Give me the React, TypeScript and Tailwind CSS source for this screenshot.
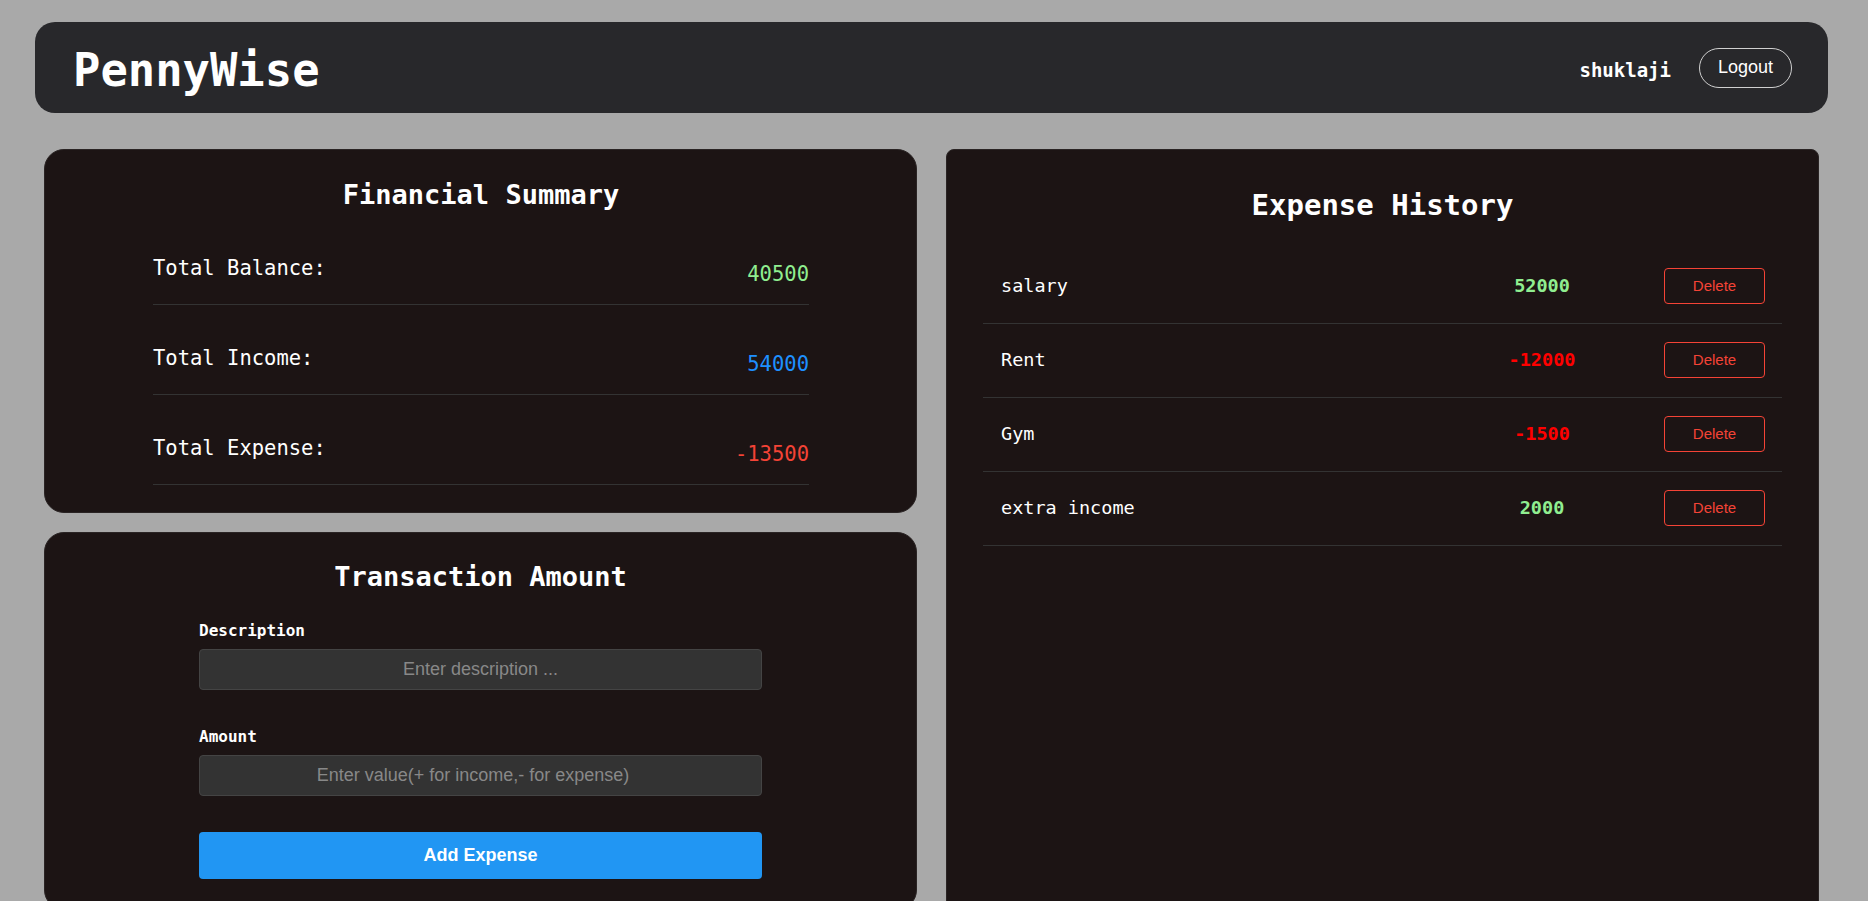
import React from "react";

const mono = { fontFamily: '"DejaVu Sans Mono", "Liberation Mono", monospace' };
const sans = { fontFamily: '"Liberation Sans", Arial, sans-serif' };

const summary = [
  { label: "Total Balance:", value: "40500", color: "text-[#90ee90]" },
  { label: "Total Income:", value: "54000", color: "text-[#1e90ff]" },
  { label: "Total Expense:", value: "-13500", color: "text-[#f44336]" },
];

const history = [
  { desc: "salary", amount: "52000", color: "text-[#90ee90]" },
  { desc: "Rent", amount: "-12000", color: "text-[#ff0000]" },
  { desc: "Gym", amount: "-1500", color: "text-[#ff0000]" },
  { desc: "extra income", amount: "2000", color: "text-[#90ee90]" },
];

export default function App() {
  return (
    <div className="min-h-screen bg-[#a9a9a9] pl-[35px] pr-[40px] pt-[22px] text-white" style={mono}>
      <header className="flex h-[91px] items-center justify-between rounded-[20px] bg-[#28282b] pl-[38px] pr-[36px]">
        <h1 className="mt-[6px] text-[45.5px] font-bold leading-[52px]">PennyWise</h1>
        <div className="flex items-center">
          <span className="mt-[5px] text-[19px] font-bold leading-6">shuklaji</span>
          <button
            className="ml-[28px] flex h-[40px] w-[93px] items-center justify-center rounded-full border border-[#d0d0d0] text-[18px] text-white"
            style={sans}
          >
            Logout
          </button>
        </div>
      </header>

      <div className="mx-[9px] mt-[36px] grid grid-cols-2 gap-[29px]">
        <div className="flex flex-col gap-[19px]">
          <section className="rounded-[20px] border border-[#2a2424] bg-[#1c1414] pb-[27px] pl-[108px] pr-[107px] pt-[29px]">
            <h2 className="mb-[4px] text-center text-[27px] font-bold leading-8">Financial Summary</h2>
            <div>
              {summary.map((s) => (
                <div key={s.label} className="flex h-[90px] justify-between border-b border-[#333]">
                  <span className="mt-[41px] text-[20.5px] leading-6">{s.label}</span>
                  <span className={`mt-[47px] text-[20.5px] leading-6 ${s.color}`}>{s.value}</span>
                </div>
              ))}
            </div>
          </section>

          <section className="rounded-[20px] border border-[#2a2424] bg-[#1c1414] pb-[30px] pt-[28px]">
            <h2 className="text-center text-[27px] font-bold leading-8">Transaction Amount</h2>
            <div className="mx-auto mt-[28px] w-[563px]">
              <label className="block text-[16px] font-bold leading-5">Description</label>
              <input
                className="mt-[8px] block h-[41px] w-full rounded-[4px] border border-[#444] bg-[#333] text-center text-[18px] text-white placeholder:text-[#888] outline-none"
                style={sans}
                placeholder="Enter description ..."
              />
              <label className="mt-[37px] block text-[16px] font-bold leading-5">Amount</label>
              <input
                className="mt-[8px] block h-[41px] w-full rounded-[4px] border border-[#444] bg-[#333] pr-[15px] text-center text-[18px] text-white placeholder:text-[#888] outline-none"
                style={sans}
                placeholder="Enter value(+ for income,- for expense)"
              />
              <button
                className="mt-[36px] block h-[47px] w-full rounded-[4px] bg-[#2196f3] text-[18px] font-bold text-white"
                style={sans}
              >
                Add Expense
              </button>
            </div>
          </section>
        </div>

        <section className="rounded-lg border border-[#2a2424] bg-[#1c1414] px-[36px] pt-[38px]">
          <h2 className="text-center text-[29px] font-bold leading-[34px]">Expense History</h2>
          <div className="mt-[28px]">
            {history.map((h) => (
              <div
                key={h.desc}
                className="flex items-center border-b border-[#333] pb-[19px] pl-[18px] pr-[17px] pt-[18px]"
              >
                <span className="flex-1 text-[18.5px] leading-6">{h.desc}</span>
                <span className={`w-[200px] text-center text-[18.5px] font-bold leading-6 ${h.color}`}>
                  {h.amount}
                </span>
                <button
                  className="ml-[22px] flex h-[36px] w-[101px] items-center justify-center rounded-[4px] border border-[#f44336] text-[15px] text-[#f44336]"
                  style={sans}
                >
                  Delete
                </button>
              </div>
            ))}
          </div>
        </section>
      </div>
    </div>
  );
}
